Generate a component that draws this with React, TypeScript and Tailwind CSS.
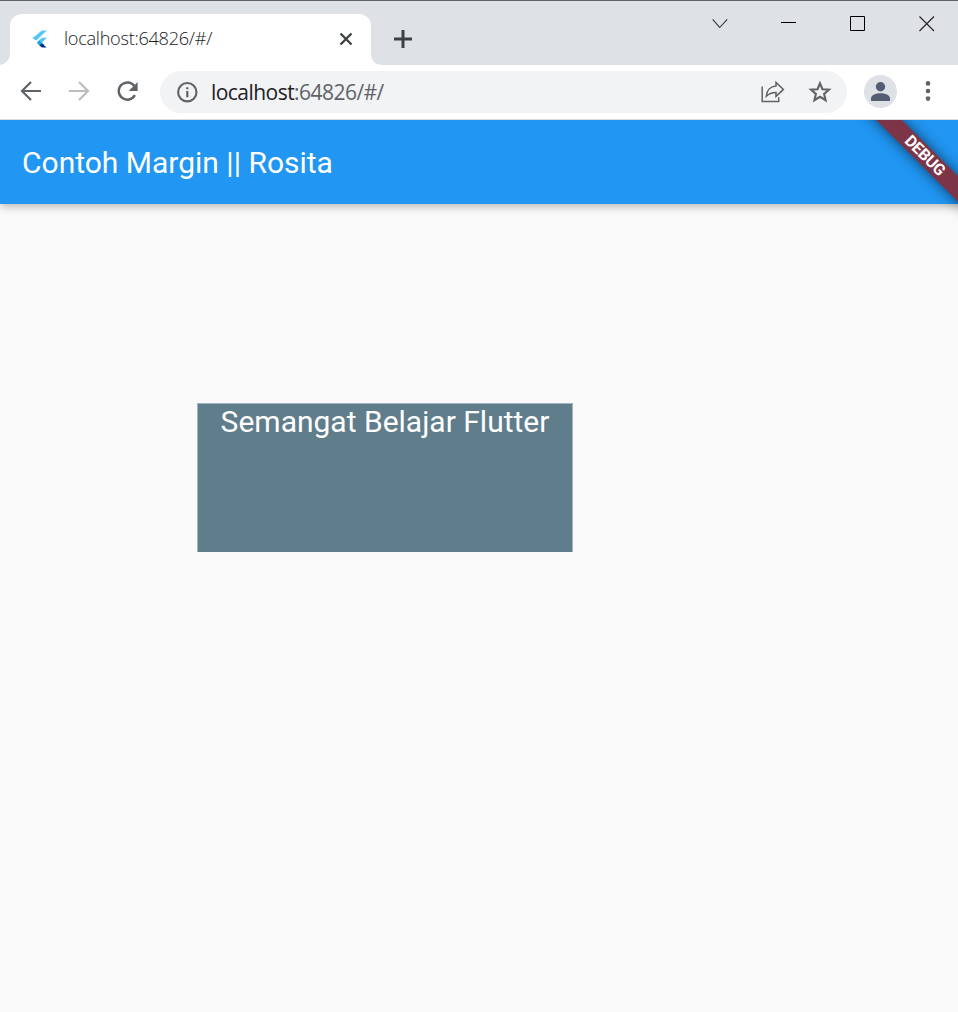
function FlutterLogo() {
  return (
    <svg className="ml-[21px] block shrink-0" width="18" height="20" viewBox="0 0 18 20">
      <path d="M11 1.4h4.8L5.2 11.4 1.4 9.2z" fill="#54c5f8" />
      <path d="M11.2 8.8H15.8L10.7 14 7.6 11.7z" fill="#54c5f8" />
      <path d="M5.8 13.7 8.2 11.3l5.2 4.6-2.7 1.2H9z" fill="#1aa0e8" />
      <path d="M8.4 16.6 11 14.6l4.6 4h-4.6z" fill="#012f7c" />
    </svg>
  );
}

function TabStrip() {
  return (
    <div className="flex h-[65px] border-t border-[#5f6368] bg-[#dee1e6]">
      <div className="flex w-[10px] shrink-0 flex-col justify-end bg-[#dee1e6]">
        <svg className="block" width="10" height="12" viewBox="0 0 10 12">
          <path d="M10 0v12H0Q10 10 10 0z" fill="#fff" />
        </svg>
      </div>
      <div className="mt-[13px] flex h-[51px] w-[360.5px] shrink-0 items-center rounded-t-[12px] bg-white pb-[2px]">
        <FlutterLogo />
        <span className="ml-[15px] w-[270px] whitespace-nowrap font-['Open_Sans',sans-serif] text-[18.2px] font-light tracking-[-0.3px] text-[#202124]">
          localhost:64826/#/
        </span>
        <svg className="ml-[4px] block" width="16" height="16" viewBox="0 0 16 16">
          <path d="m2.5 2.5 11 11m0-11-11 11" stroke="#3c4043" strokeWidth="2.3" />
        </svg>
      </div>
      <div className="flex flex-1 items-start">
        <svg className="block self-end" width="12" height="12" viewBox="0 0 12 12">
          <path d="M0 0v12h12Q0 12 0 0z" fill="#fff" />
        </svg>
        <svg className="ml-[10.5px] mt-[28px] block" width="20" height="20" viewBox="0 0 20 20">
          <path d="M10 1v18M1 10h18" stroke="#3c4043" strokeWidth="3" />
        </svg>
      </div>
      <div className="flex shrink-0 items-start">
        <svg className="mr-[53px] mt-[14px] block" width="16" height="16" viewBox="0 0 16 16">
          <path d="m.7 4.3 7 8.2 7.5-8.2" fill="none" stroke="#333" strokeWidth="1.1" />
        </svg>
        <svg className="mr-[53px] mt-[14px] block" width="16" height="16" viewBox="0 0 16 16">
          <path d="M0 7.5h15" stroke="#000" />
        </svg>
        <svg className="mr-[53px] mt-[15px] block" width="16" height="16" viewBox="0 0 16 16">
          <path d="M.5.5h14v14H.5z" fill="none" stroke="#000" />
        </svg>
        <svg className="mr-[23px] mt-[15px] block" width="16" height="16" viewBox="0 0 16 16">
          <path d="m.5.5 14.5 14.5m0-14.5L.5 15" stroke="#222" strokeWidth="1.1" />
        </svg>
      </div>
    </div>
  );
}

function Toolbar() {
  return (
    <div className="flex h-[55px] items-center border-b border-[#dadce0] bg-white">
      <svg className="mb-[2px] ml-[20px] block" width="22" height="22" viewBox="0 0 22 22">
        <path d="M21 11H3M11 2l-9 9 9 9" fill="none" stroke="#5f6368" strokeWidth="2.2" />
      </svg>
      <svg className="mb-[2px] ml-[26px] block" width="22" height="22" viewBox="0 0 22 22">
        <path d="M1 11h18M11 2l9 9-9 9" fill="none" stroke="#babcbe" strokeWidth="2.2" />
      </svg>
      <svg className="ml-[26px] block" width="24" height="22" viewBox="0 0 24 22">
        <path d="M18.6 5.4A8.6 8.6 0 1 0 18.9 14.2" fill="none" stroke="#5f6368" strokeWidth="2.4" />
        <path d="M21.6 1v9h-9z" fill="#5f6368" />
      </svg>
      <div className="ml-[20px] flex h-[42px] w-[687px] items-center rounded-full bg-[#f1f3f4]">
        <svg className="ml-[16px] block" width="22" height="22" viewBox="0 0 22 22">
          <circle cx="11.3" cy="11.2" r="9.2" fill="none" stroke="#5f6368" strokeWidth="2.1" />
          <path d="M11.3 10V16.2M11.3 6.2v2.1" stroke="#5f6368" strokeWidth="2.2" />
        </svg>
        <span className="ml-[13px] flex-1 whitespace-nowrap pt-[1px] font-['Open_Sans',sans-serif] text-[21px] tracking-[-0.54px] text-[#5f6368]">
          <span className="text-[#202124]">localhost</span>:64826/#/
        </span>
        <svg className="mr-[23px] block" width="24" height="22" viewBox="0 0 24 22">
          <path d="M1.2 5.5v15h16.5v-4.3" fill="none" stroke="#5f6368" strokeWidth="1.5" />
          <path d="M5.3 15.3C5.7 9.3 9.5 5.3 15 5V1.4l7.4 7-7.4 7v-4c-4.5.1-7.2 1.2-9.7 3.9z" fill="none" stroke="#5f6368" strokeWidth="1.5" />
        </svg>
        <svg className="mr-[15px] block" width="24" height="24" viewBox="0 0 24 24">
          <path
            d="m12 3.3 2.5 5.9 6.5.5-4.9 4.2 1.5 6.3-5.6-3.4-5.6 3.4 1.5-6.3L3 9.7l6.5-.5z"
            fill="none"
            stroke="#5f6368"
            strokeWidth="2.1"
          />
        </svg>
      </div>
      <div className="mb-[1px] ml-[17px] flex size-[33px] items-center justify-center rounded-full bg-[#dee1e6]">
        <svg className="block" width="19" height="19" viewBox="0 0 19 19">
          <circle cx="9.5" cy="4.7" r="4.7" fill="#535e70" />
          <path d="M0 19v-2.5C0 13 5 11.3 9.5 11.3S19 13 19 16.5V19z" fill="#535e70" />
        </svg>
      </div>
      <svg className="mb-[2px] ml-[28px] block" width="6" height="20" viewBox="0 0 6 20">
        <circle cx="3" cy="2.4" r="2.3" fill="#5f6368" />
        <circle cx="3" cy="10" r="2.3" fill="#5f6368" />
        <circle cx="3" cy="17.6" r="2.3" fill="#5f6368" />
      </svg>
    </div>
  );
}

export default function App() {
  return (
    <div className="flex h-[1012px] w-[958px] flex-col overflow-hidden bg-[#fafafa] font-[Roboto,sans-serif]">
      <TabStrip />
      <Toolbar />
      <div className="relative flex-1 overflow-hidden">
        <header className="flex h-[84px] items-center bg-[#2196f3] pl-[22px] pt-[2px] shadow-[0_3px_6px_-1px_rgba(0,0,0,0.12),0_6px_8px_rgba(0,0,0,0.05),0_1px_12px_rgba(0,0,0,0.12)]">
          <h1 className="whitespace-nowrap text-[30px] leading-[36px] text-white">
            Contoh Margin || Rosita
          </h1>
        </header>
        <main className="ml-[197px] mt-[199px] flex h-[149px] w-[376px] justify-center border-x border-t border-[#a3b3bb] bg-[#607d8b]">
          <p className="whitespace-nowrap text-[30px] leading-[35px] text-white">
            Semangat Belajar Flutter
          </p>
        </main>
        <div className="absolute right-[-86px] top-[26px] flex h-[18px] w-[240px] rotate-45 items-center justify-center bg-[#7d3447] pl-[2px] shadow-[0_0_14px_rgba(0,0,0,0.6)]">
          <span className="text-[16px] font-bold leading-none tracking-[-0.3px] text-white">DEBUG</span>
        </div>
      </div>
    </div>
  );
}
